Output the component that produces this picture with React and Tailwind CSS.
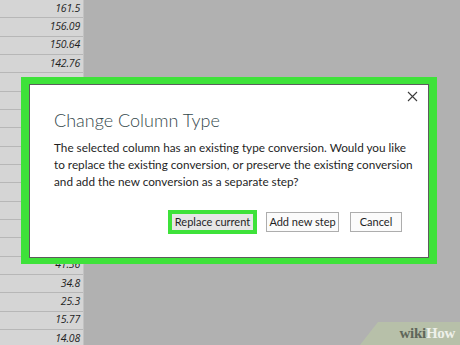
import React from 'react';

// rows 4-13 sit under the dialog, so they stay blank
const values = [
  '161.5', '156.09', '150.64', '142.76', '', '', '', '', '',
  '', '', '', '', '', '41.36', '34.8', '25.3', '15.77', '14.08',
];

function Sheet() {
  return (
    <div className="w-[84px] flex flex-col border-r border-[#c2c2c2]">
      {values.map((v, i) => (
        <div
          key={i}
          className="h-[18.33px] shrink-0 box-border border-b border-[#b7b7b7] bg-[#d5d5d5] flex items-center justify-end pr-[3px] text-[10.5px] italic text-[#1e1e1e] tracking-[-0.2px]"
          style={{ fontFamily: '"Open Sans", sans-serif' }}
        >
          {v}
        </div>
      ))}
    </div>
  );
}

function ChangeTypeDialog() {
  return (
    <div className="absolute left-[21px] top-[77px] w-[416px] h-[187px] box-border border-l-8 border-r-8 border-t-[7px] border-b-[6px] border-[#3ee23a]">
      <div className="w-full h-full box-border border border-[#5c5c5c] bg-white relative pl-[24px] pr-[20px]">
        <button className="absolute right-[9px] top-[4px] w-[14px] h-[14px] flex items-center justify-center">
          <svg width="11" height="11" viewBox="0 0 11 11">
            <path d="M1 1 L10 10 M10 1 L1 10" stroke="#3c3c3c" strokeWidth="1.1" />
          </svg>
        </button>
        <h1 className="pt-[23px] text-[18px] leading-[24px] font-light text-[#34484c] whitespace-nowrap">Change Column Type</h1>
        <div className="mt-[7px] text-[11.75px] leading-[17px] text-[#1f1f1f] whitespace-nowrap">
          <p>The selected column has an existing type conversion. Would you like</p>
          <p>to replace the existing conversion, or preserve the existing conversion</p>
          <p>and add the new conversion as a separate step?</p>
        </div>
        <div className="mt-[20px] pr-[6px] flex items-center justify-end">
          <button className="w-[89px] h-[24px] box-border border-[4px] border-[#3ee23a] bg-[#e6e6e6] text-[11px] text-[#1f1f1f] flex items-center justify-center whitespace-nowrap">
            Replace current
          </button>
          <button className="ml-[9px] w-[73px] h-[20px] box-border border border-[#adadad] bg-[#fbfbfb] text-[11px] text-[#1f1f1f] flex items-center justify-center whitespace-nowrap">
            Add new step
          </button>
          <button className="ml-[11px] w-[52px] h-[20px] box-border border border-[#adadad] bg-[#fbfbfb] text-[11px] text-[#1f1f1f] flex items-center justify-center whitespace-nowrap">
            Cancel
          </button>
        </div>
      </div>
    </div>
  );
}

function WikiHowMark() {
  return (
    <div className="absolute right-0 bottom-0 w-[100px] h-[23px]">
      <svg className="absolute inset-0" width="100" height="23" viewBox="0 0 100 23">
        <polygon points="18,0 100,0 100,23 0,23" fill="#b9c3a8" opacity="0.85" />
      </svg>
      <div className="relative h-full flex items-center justify-end pr-[5px] text-[15px] font-bold tracking-[-0.3px]" style={{ fontFamily: '"Liberation Serif", serif' }}>
        <span className="text-[#5f665a]">wiki</span>
        <span className="text-[#eef0ea]">How</span>
      </div>
    </div>
  );
}

export default function App() {
  return (
    <div className="w-[460px] h-[345px] relative overflow-hidden bg-[#b1b1b1]" style={{ fontFamily: 'Lato, "Open Sans", sans-serif' }}>
      <Sheet />
      <ChangeTypeDialog />
      <WikiHowMark />
    </div>
  );
}
